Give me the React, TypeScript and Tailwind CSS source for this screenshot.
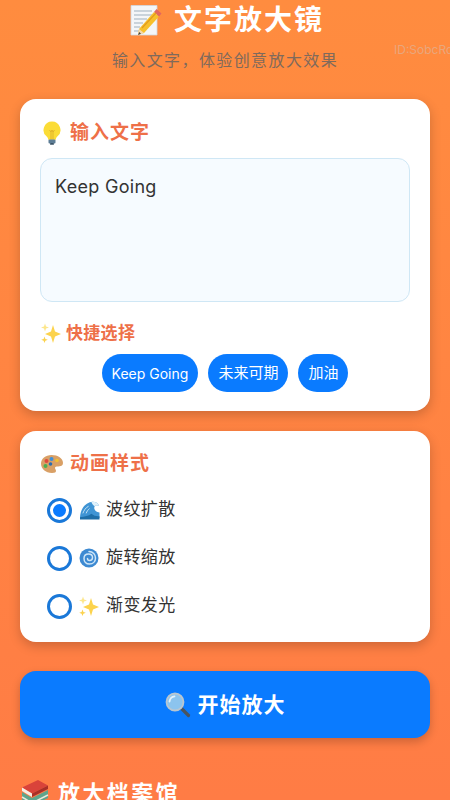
import React from "react";

const Memo = () => (
  <svg viewBox="0 0 32 32" className="w-8 h-8 shrink-0">
    <path d="M1 1.500h26v29.500H1z" fill="#f4f6f8" stroke="#cfd8e0" strokeWidth="0.8" />
    <path d="M4 7h18M4 11h18M4 15h13M4 19h9M4 23h6M4 27h6" stroke="#9fb0bd" strokeWidth="1" />
    <path d="M9 25l15-17 5 4.500L14 29l-6 2z" fill="#f7c02c" />
    <path d="M9 25l5 4-6 2z" fill="#f3d9b0" />
    <path d="M8 31l1.200-3 1.800 1.700z" fill="#444" />
    <path d="M24 8l2.500-3 5 4.500-2.500 3z" fill="#e2665f" />
    <path d="M12 24L26 9" stroke="#e39b1c" strokeWidth="1.200" />
  </svg>
);
const Bulb = () => (
  <svg viewBox="0 0 18 24" className="w-[18px] h-[24px] shrink-0">
    <path d="M9 .5a8.500 8.500 0 0 0-5.300 15.100c1 .9 1.400 2 1.500 3.200h7.600c.1-1.200.5-2.300 1.500-3.200A8.500 8.500 0 0 0 9 .5z" fill="#fbdc36" />
    <path d="M6.500 9l1.500 2 1-2 1 2 1.500-2M8 11v7.500M10 11v7.500" stroke="#d9a323" strokeWidth=".7" fill="none" />
    <rect x="5.500" y="18.500" width="7" height="4" rx="1" fill="#5d7d95" />
    <rect x="7" y="22" width="4" height="1.800" rx=".9" fill="#3b5568" />
  </svg>
);
const Sparkles = ({ cls }: { cls: string }) => (
  <svg viewBox="0 0 22 22" className={cls}>
    <path d="M13 3l2 6.500L21 12l-6 2.500L13 21l-2-6.500L5 12l6-2.500z" fill="#fcd34d" />
    <path d="M5 1.500l1 3 3 1-3 1-1 3-1-3-3-1 3-1z" fill="#fde68a" />
    <path d="M4.500 14.500l.9 2.400 2.400.9-2.400.9-.9 2.400-.9-2.400-2.400-.9 2.400-.9z" fill="#fbd24e" />
  </svg>
);
const Palette = () => (
  <svg viewBox="0 0 24 24" className="w-6 h-6 shrink-0">
    <path d="M11.500 3C5.500 3 1 6.800 1 11.800 1 16.600 5.500 21 12 21c3 0 4-1 4-2.300 0-1.700-1.800-2.200-.8-3.500 1.200-1.500 7.800.5 7.800-4.200C23 6.500 18 3 11.500 3z" fill="#d9a066" />
    <circle cx="6.500" cy="9" r="2" fill="#e0483e" />
    <circle cx="11.500" cy="7" r="2" fill="#3f8fd8" />
    <circle cx="5.500" cy="14" r="2" fill="#4caf50" />
    <circle cx="10.500" cy="12" r="1.800" fill="#2b6cb0" />
    <circle cx="17" cy="8.500" r="1.800" fill="#f2c230" />
  </svg>
);
const Wave = () => (
  <svg viewBox="0 0 22 20" className="w-[21px] h-[19px] shrink-0">
    <path d="M1 17C1.500 9 6 2 13 1c4-.5 7 1 8 4-1.500-.8-3.500-.8-4.500.5-1 1.500-.5 3.500 1 5 1 1 2.500 1.500 4 1.500v6H1z" fill="#3f94d4" />
    <path d="M13 1c4-.5 7 1 8 4-1.500-.8-3.500-.8-4.500.5-1.500-1-3-2.800-3.500-4.500z" fill="#dff1fb" />
    <path d="M4 13c1-3 3-6 6-7.500M7.500 13c.7-2 1.800-3.700 3.500-5" stroke="#c9e6f7" strokeWidth="1" fill="none" />
    <path d="M1 19.500h20.500V16c-3 .3-6-.3-8.500-2.500-3 2.500-7 3-12 3.500z" fill="#1e6ea8" />
  </svg>
);
const Cyclone = () => (
  <svg viewBox="0 0 20 20" className="w-5 h-5 shrink-0">
    <circle cx="10" cy="10" r="9.500" fill="#3d8ad2" />
    <path d="M10 3.500c4 0 6.500 3 6.500 6.500s-2.500 6-6 6-5.500-2.500-5.500-5.500 2-4.500 4.500-4.500 4 1.500 4 3.500-1.500 3-3 3-2-1-2-2" stroke="#cfe6f7" strokeWidth="1.500" fill="none" strokeLinecap="round" />
  </svg>
);
const Magnifier = () => (
  <svg viewBox="0 0 26 26" className="w-[26px] h-[26px] shrink-0">
    <path d="M15.500 15.500l8 8" stroke="#4a5560" strokeWidth="3.200" strokeLinecap="round" />
    <circle cx="10" cy="10" r="8.500" fill="#8cc4ee" stroke="#b9c6d0" strokeWidth="1.800" />
    <path d="M4.500 9.500c.5-3 2.500-5 5-5.200" stroke="#e4f3fc" strokeWidth="1.800" fill="none" strokeLinecap="round" />
  </svg>
);
const Books = () => (
  <svg viewBox="0 0 30 28" className="w-[30px] h-[28px] shrink-0">
    <path d="M2 8.500L18 1l10 5.500-16 8z" fill="#d9433a" />
    <path d="M2 8.500l10 6V18L2 12z" fill="#f3efe6" />
    <path d="M12 14.500l16-8V10l-16 8z" fill="#a92f28" />
    <path d="M2 13l10 6 16-8v8l-16 8-10-6z" fill="#5fa58c" />
    <path d="M2 18l10 6 16-8" stroke="#eee8da" strokeWidth="1.500" fill="none" />
  </svg>
);

const Radio = ({ on, icon, label }: { on?: boolean; icon: React.ReactNode; label: string }) => (
  <div className="flex items-center h-[48px]">
    <div className="w-[25px] h-[25px] rounded-full border-[3px] border-[#1a78d8] flex items-center justify-center shrink-0">
      {on && <div className="w-[13px] h-[13px] rounded-full bg-[#0a7bff]" />}
    </div>
    <div className="w-[34px] flex justify-center">{icon}</div>
    <span className="text-[17px] text-[#333] tracking-[0.4px]">{label}</span>
  </div>
);

const Chip = ({ label, cjk }: { label: string; cjk?: boolean }) => (
  <div className={`h-[38px] px-[10px] rounded-[19px] bg-[#0a7bff] text-white flex items-center ${cjk ? "text-[15px]" : "text-[14px]"}`}>
    {label}
  </div>
);

export default function App() {
  return (
    <div className="font-['Inter','Noto_Sans_CJK_SC',sans-serif] relative w-[450px] h-[800px] overflow-hidden bg-gradient-to-b from-[#ff8c3f] to-[#ff7c45]">
      <div className="absolute right-0 top-[41px] w-[56px] overflow-hidden whitespace-nowrap text-[12px] text-[#e9a67c]">ID:SobcRq</div>

      <div className="flex justify-center items-center gap-[12px] h-[40px] pl-[4px]">
        <Memo />
        <h1 className="text-[28px] font-bold text-white tracking-[2px] leading-[40px]">文字放大镜</h1>
      </div>
      <p className="mt-[6px] text-center text-[16px] leading-[28px] tracking-[1.400px] text-[#7f6a5c]">输入文字，体验创意放大效果</p>

      <div className="mx-[20px] mt-[25px] h-[312px] bg-white rounded-[16px] shadow-[0_4px_12px_rgba(0,0,0,0.2)] px-[20px] pt-[21px]">
        <div className="flex items-center h-[26px] gap-[9px] pl-[3px]">
          <Bulb />
          <span className="text-[19px] font-bold text-[#ee7048] tracking-[1px]">输入文字</span>
        </div>
        <div className="mt-[12px] h-[144px] rounded-[12px] border border-[#cfe7f5] bg-[#f6fbff] px-[14px] pt-[15px] text-[18px] text-[#333] leading-[26px] tracking-[0.300px]">
          Keep Going
        </div>
        <div className="mt-[20px] flex items-center h-[24px] gap-[4px]">
          <Sparkles cls="w-[22px] h-[22px] shrink-0 -mt-[2px]" />
          <span className="text-[17px] font-bold text-[#ee7048] tracking-[0.300px]">快捷选择</span>
        </div>
        <div className="mt-[8px] flex justify-center gap-[10px]">
          <Chip label="Keep Going" />
          <Chip label="未来可期" cjk />
          <Chip label="加油" cjk />
        </div>
      </div>

      <div className="mx-[20px] mt-[20px] h-[211px] bg-white rounded-[16px] shadow-[0_4px_12px_rgba(0,0,0,0.2)] px-[20px] pt-[20px]">
        <div className="flex items-center h-[26px] gap-[6px]">
          <Palette />
          <span className="text-[19px] font-bold text-[#ee7048] tracking-[1px]">动画样式</span>
        </div>
        <div className="mt-[9px] pl-[7px] flex flex-col">
          <Radio on icon={<Wave />} label="波纹扩散" />
          <Radio icon={<Cyclone />} label="旋转缩放" />
          <Radio icon={<Sparkles cls="w-[22px] h-[22px] shrink-0" />} label="渐变发光" />
        </div>
      </div>

      <div className="mx-[20px] mt-[29px] h-[67px] rounded-[16px] bg-[#0a7bff] shadow-[0_4px_10px_rgba(0,0,0,0.2)] flex items-center justify-center gap-[7px]">
        <Magnifier />
        <span className="text-[21px] font-bold text-white tracking-[1px]">开始放大</span>
      </div>

      <div className="mx-[20px] mt-[39px] flex items-center gap-[8px] h-[32px]">
        <Books />
        <span className="text-[22px] font-bold text-white tracking-[2.400px]">放大档案馆</span>
      </div>
    </div>
  );
}
